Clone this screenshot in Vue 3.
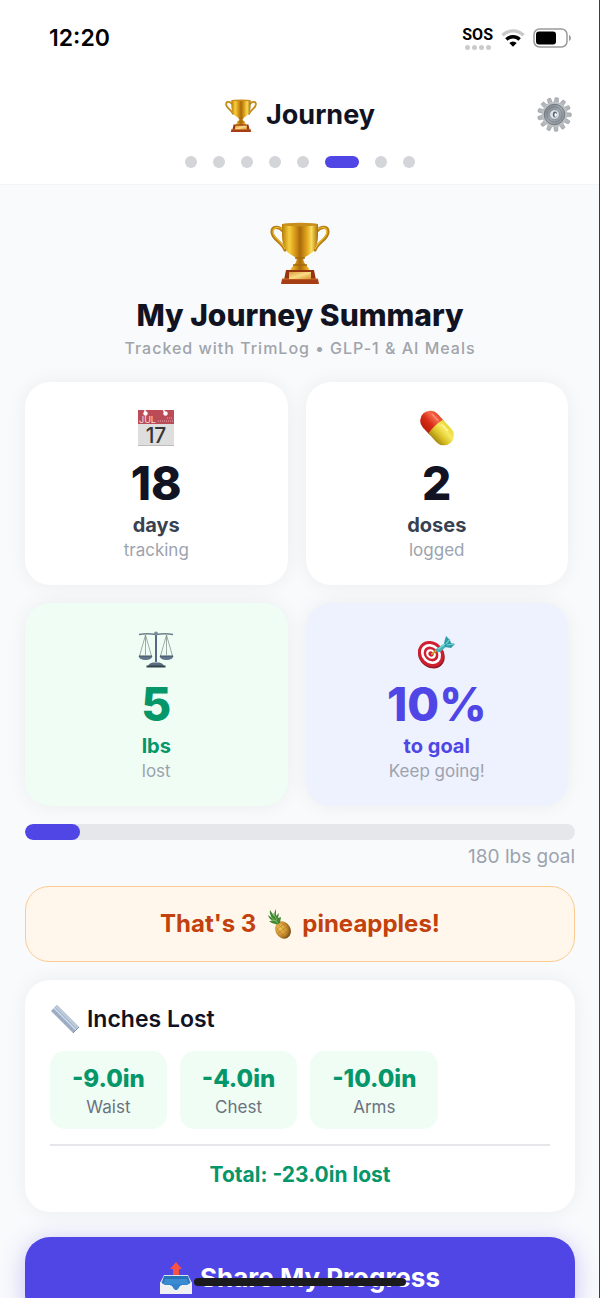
<script setup>
import { ref, computed } from 'vue';

const pageCount = 8;
const activePage = ref(5);

const stats = [
    { icon: 'calendar', value: '18', unit: 'days', note: 'tracking', tone: 'plain' },
    { icon: 'pill', value: '2', unit: 'doses', note: 'logged', tone: 'plain' },
    { icon: 'scale', value: '5', unit: 'lbs', note: 'lost', tone: 'green' },
    { icon: 'target', value: '10%', unit: 'to goal', note: 'Keep going!', tone: 'indigo' },
];

const goalPercent = ref(10);

const measurements = [
    { label: 'Waist', lost: 9 },
    { label: 'Chest', lost: 4 },
    { label: 'Arms', lost: 10 },
];

const totalLost = computed(() => measurements.reduce((sum, m) => sum + m.lost, 0));

const gearTeeth = Array.from({ length: 13 }, (_, i) => (i * 360) / 13 + 8);
</script>

<template>
    <div class="app">
        <!-- shared gradients and the trophy, which is drawn twice -->
        <svg class="defs" width="0" height="0" aria-hidden="true">
            <defs>
                <linearGradient id="gold" x1="0" x2="1" y1="0" y2="0">
                    <stop offset="0" stop-color="#b87a08" />
                    <stop offset="0.2" stop-color="#f6cf3c" />
                    <stop offset="0.36" stop-color="#d9981a" />
                    <stop offset="0.5" stop-color="#a86a0c" />
                    <stop offset="0.68" stop-color="#e0a21c" />
                    <stop offset="0.82" stop-color="#f9dc5a" />
                    <stop offset="1" stop-color="#a96c08" />
                </linearGradient>
                <linearGradient id="plate" x1="0" x2="1" y1="0" y2="1">
                    <stop offset="0" stop-color="#d99a35" />
                    <stop offset="0.5" stop-color="#fbdc86" />
                    <stop offset="1" stop-color="#d8942c" />
                </linearGradient>
            </defs>
            <symbol id="trophy" viewBox="0 0 60 62">
                <path
                    d="M13 9C9 4 2 4 2 10c0 7 10 10 13 18M47 9c4-5 11-5 11 1 0 7-10 10-13 18"
                    fill="none"
                    stroke="#b57c10"
                    stroke-width="3.2"
                    stroke-linecap="round"
                />
                <path
                    d="M13 8C9 4 3 5 3 10c0 6 9 9 12 17M47 8c4-4 10-3 10 2 0 6-9 9-12 17"
                    fill="none"
                    stroke="#edbd35"
                    stroke-width="1.2"
                />
                <path
                    d="M12 2h36v11c0 11-4 18-13 22-2 1-2 3-1 5 1 3 5 5 6 9H20c1-4 5-6 6-9 1-2 1-4-1-5-9-4-13-11-13-22z"
                    fill="url(#gold)"
                />
                <ellipse cx="30" cy="2.6" rx="18" ry="1.8" fill="#c98d1c" />
                <path d="M25 36h10M23 43h14" stroke="#a3690d" stroke-width="1.4" />
                <path d="M16 48h28l2 10H14z" fill="#963410" />
                <path d="M12 57h36l1 5H11z" fill="#a53e14" />
                <path d="M12 57h36" stroke="#cf6c2d" stroke-width="1" />
                <path d="M19 50h22v7H19z" fill="url(#plate)" />
            </symbol>
        </svg>

        <div class="status-bar">
            <span class="clock">12:20</span>
            <div class="signals">
                <div class="sos">
                    <span>SOS</span>
                    <div class="sos-dots"><i v-for="n in 4" :key="n" /></div>
                </div>
                <svg class="wifi" viewBox="0 0 24 18" aria-hidden="true">
                    <path d="M1.5 6.2a15 15 0 0 1 21 0" fill="none" stroke="#c9c9cb" stroke-width="3.4" />
                    <path d="M5.4 10.5a9.4 9.4 0 0 1 13.2 0" fill="none" stroke="#000" stroke-width="3.4" />
                    <path d="M12 17.8l-3.7-3.9a5.3 5.3 0 0 1 7.4 0z" fill="#000" />
                </svg>
                <svg class="battery" viewBox="0 0 38 20" aria-hidden="true">
                    <rect x="1" y="1" width="33" height="18" rx="5.5" fill="#fff" stroke="#9b9b9b" stroke-width="1.5" />
                    <rect x="3" y="3.5" width="20" height="13" rx="3" fill="#000" />
                    <path d="M36 7c2.6 1 2.6 5 0 6z" fill="#9b9b9b" />
                </svg>
            </div>
        </div>

        <header class="header">
            <h1 class="header-title">
                <svg class="trophy-small" aria-hidden="true"><use href="#trophy" /></svg>
                Journey
            </h1>
            <button class="settings" type="button" aria-label="Settings">
                <svg viewBox="0 0 36 36" aria-hidden="true">
                    <defs>
                        <linearGradient id="steel" x1="0" x2="1" y1="0" y2="1">
                            <stop offset="0" stop-color="#747b83" />
                            <stop offset="0.5" stop-color="#a4abb2" />
                            <stop offset="1" stop-color="#858c94" />
                        </linearGradient>
                    </defs>
                    <path
                        v-for="angle in gearTeeth"
                        :key="angle"
                        d="M15.8 8L16.2 1Q18 0 19.8 1L20.2 8z"
                        fill="#b3b7bb"
                        stroke="#8a8f95"
                        stroke-width="0.5"
                        :transform="`rotate(${angle} 18 18)`"
                    />
                    <circle cx="18" cy="18" r="13" fill="#bdc0c3" />
                    <circle cx="18" cy="18" r="10.5" fill="url(#steel)" stroke="#6f767e" stroke-width="1" />
                    <circle cx="18" cy="18" r="7.8" fill="none" stroke="#737b84" stroke-width="0.8" />
                    <circle cx="18" cy="18" r="5" fill="#dfe4e9" stroke="#79828c" stroke-width="0.8" />
                    <ellipse cx="18.5" cy="18" rx="2.2" ry="3" fill="#59616a" />
                    <ellipse cx="19.2" cy="18.4" rx="1.3" ry="2" fill="#fff" />
                </svg>
            </button>
            <nav class="dots" aria-label="Pages">
                <button
                    v-for="n in pageCount"
                    :key="n"
                    type="button"
                    class="dot"
                    :class="{ active: n - 1 === activePage }"
                    :aria-label="`Page ${n}`"
                    @click="activePage = n - 1"
                />
            </nav>
        </header>

        <main class="content">
            <section class="intro">
                <svg class="trophy-large" aria-hidden="true"><use href="#trophy" /></svg>
                <h2>My Journey Summary</h2>
                <p>Tracked with TrimLog • GLP-1 &amp; AI Meals</p>
            </section>

            <section class="stats">
                <article v-for="stat in stats" :key="stat.icon" class="stat" :class="stat.tone">
                    <svg v-if="stat.icon === 'calendar'" class="stat-icon" viewBox="0 0 42 42" aria-hidden="true">
                        <path d="M3 3h36v36H3z" fill="#dedede" />
                        <path d="M3 3h36v14H3z" fill="#bb4c57" />
                        <path d="M3 38h36v1H3z" fill="#bcbcbc" />
                        <circle cx="10.5" cy="6.5" r="2.2" fill="#fff" />
                        <circle cx="30.5" cy="6.5" r="2.2" fill="#fff" />
                        <path d="M10 3v3M28 2l2 4" stroke="#fff" stroke-width="1.4" />
                        <path d="M23 14h15M32 11h6" stroke="#cd7880" stroke-width="2" stroke-dasharray="1 1" />
                        <text x="4" y="16" class="cal-month">JUL</text>
                        <text x="21" y="36" text-anchor="middle" class="cal-day">17</text>
                    </svg>
                    <svg v-else-if="stat.icon === 'pill'" class="stat-icon" viewBox="0 0 42 42" aria-hidden="true">
                        <defs>
                            <linearGradient id="pillRed" x1="0" x2="0" y1="0" y2="1">
                                <stop offset="0" stop-color="#e8452a" />
                                <stop offset="0.25" stop-color="#f4684c" />
                                <stop offset="0.6" stop-color="#d92c17" />
                                <stop offset="1" stop-color="#b81c0c" />
                            </linearGradient>
                            <linearGradient id="pillYellow" x1="0" x2="0" y1="0" y2="1">
                                <stop offset="0" stop-color="#ead733" />
                                <stop offset="0.3" stop-color="#f6e962" />
                                <stop offset="0.65" stop-color="#dcc428" />
                                <stop offset="1" stop-color="#a88a12" />
                            </linearGradient>
                        </defs>
                        <g transform="rotate(47 21 21)">
                            <path d="M21 11H11a10 10 0 0 0 0 20H21z" fill="url(#pillRed)" />
                            <path d="M19 11h12a10 10 0 0 1 0 20H19q-2-10 0-20z" fill="url(#pillYellow)" />
                            <path d="M8 15h8" stroke="#ff8a6e" stroke-width="1.6" stroke-linecap="round" />
                            <path d="M22 15h8" stroke="#fff59a" stroke-width="1.6" stroke-linecap="round" />
                        </g>
                    </svg>
                    <svg v-else-if="stat.icon === 'scale'" class="stat-icon" viewBox="0 0 42 42" aria-hidden="true">
                        <path d="M4 6.5q8-1.5 17 0 9-1.5 17 0" fill="none" stroke="#6e7f87" stroke-width="1.3" />
                        <path d="M21 5v29" stroke="#526a86" stroke-width="2" />
                        <circle cx="21" cy="5.5" r="2" fill="#7c8e9b" />
                        <path
                            d="M10.500 7L4.500 28M10.500 7l6 21M10.500 7v20M31.500 7l-6 21M31.500 7l6 21M31.500 7v20"
                            fill="none"
                            stroke="#87968f"
                            stroke-width="0.8"
                        />
                        <path d="M3.5 28h14q-1 4-7 4t-7-4zM24.5 28h14q-1 4-7 4t-7-4z" fill="#60758a" />
                        <path d="M4 28h13M25 28h13" stroke="#3f5260" stroke-width="1" />
                        <path d="M13 38q1-3 5-3.500h6q4 .5 5 3.500z" fill="#5b6f80" />
                        <path d="M11.5 37.500h19v2h-19z" fill="#33424d" />
                    </svg>
                    <svg v-else class="stat-icon" viewBox="0 0 42 42" aria-hidden="true">
                        <g transform="rotate(45 15 26)">
                            <ellipse cx="16" cy="26.5" rx="14.3" ry="12.3" fill="#8e1620" />
                            <ellipse cx="15" cy="26" rx="13.8" ry="12" fill="#cf2030" />
                            <ellipse cx="15" cy="26" rx="10.8" ry="9.2" fill="#fff" />
                            <ellipse cx="15" cy="26" rx="8" ry="6.7" fill="#cf2030" />
                            <ellipse cx="15" cy="26" rx="5.3" ry="4.4" fill="#fff" />
                            <ellipse cx="15" cy="26" rx="2.800" ry="2.300" fill="#cf2030" />
                        </g>
                        <path d="M16 26l6-5" stroke="#d29b1e" stroke-width="2" stroke-linecap="round" />
                        <path d="M20 21l9-6 2 3-7 6q-4 1-4-3z" fill="#42b5b8" />
                        <path d="M28 15l2-7 4 4 1 3 4 1-4 4-6-1z" fill="#2c9da6" />
                        <path d="M30 16l4-5M31 17l7-1" stroke="#78d5d6" stroke-width="1.2" />
                        <path d="M22 21l7-5" stroke="#83dcdb" stroke-width="1.2" />
                    </svg>
                    <strong class="stat-value">{{ stat.value }}</strong>
                    <span class="stat-unit">{{ stat.unit }}</span>
                    <span class="stat-note">{{ stat.note }}</span>
                </article>
            </section>

            <section class="goal">
                <div class="goal-track" role="progressbar" :aria-valuenow="goalPercent" aria-label="Goal progress">
                    <div class="goal-fill" :style="{ width: `${goalPercent}%` }" />
                </div>
                <p>180 lbs goal</p>
            </section>

            <section class="fun-fact">
                <span>That's 3</span>
                <svg class="pineapple" viewBox="0 0 28 32" aria-hidden="true">
                    <defs>
                        <radialGradient id="pineBody" cx="0.4" cy="0.35" r="0.7">
                            <stop offset="0" stop-color="#f3c456" />
                            <stop offset="0.6" stop-color="#c98f30" />
                            <stop offset="1" stop-color="#66400f" />
                        </radialGradient>
                    </defs>
                    <ellipse cx="18" cy="22" rx="7.5" ry="9" transform="rotate(-28 18 22)" fill="url(#pineBody)" />
                    <path
                        d="M12 21l9-6M13 25l10-7M16 28l8-6M14 17l9 9M17 15l8 8M12 21l8 8"
                        stroke="#a56d20"
                        stroke-width="0.4"
                    />
                    <path
                        d="M13 16Q8 17 4 13l4 0Q4 11 3 7l4 3Q4 5 5 2l4 6Q9 4 11 1l0 7 3-3-1 5 3-1-1 6z"
                        fill="#3f8735"
                    />
                    <path d="M13 15L6 9M12 12L8 5M12 13L6 12" stroke="#83bd5e" stroke-width="0.9" />
                </svg>
                <span>pineapples!</span>
            </section>

            <section class="inches">
                <h3>
                    <svg class="ruler" viewBox="0 0 30 30" aria-hidden="true">
                        <path d="M7 1l22 22-6 6L1 7z" fill="#9daec5" />
                        <path d="M7 1l22 22-2 2L5 3z" fill="#bccadb" />
                        <path d="M4 4l22 22" stroke="#d2deeb" stroke-width="1.2" />
                        <path
                            d="M2 8l2-2M5 11l2-2M8 14l2-2M11 17l2-2M14 20l2-2M17 23l2-2M20 26l2-2"
                            stroke="#8c9db5"
                            stroke-width="0.5"
                        />
                        <path d="M23 29l6-6" stroke="#8092ac" stroke-width="1" />
                    </svg>
                    Inches Lost
                </h3>
                <ul class="chips">
                    <li v-for="m in measurements" :key="m.label">
                        <strong>-{{ m.lost.toFixed(1) }}in</strong>
                        <span>{{ m.label }}</span>
                    </li>
                </ul>
                <p class="total">Total: -{{ totalLost.toFixed(1) }}in lost</p>
            </section>

            <button class="share" type="button">
                <svg class="outbox" viewBox="0 0 32 32" aria-hidden="true">
                    <path d="M4 13h24l4 8H0z" fill="#d6e4f0" />
                    <path d="M4 14h24l3 9H1z" fill="#2672b8" />
                    <path d="M5 17h22l2 6H3z" fill="#3b8bd2" />
                    <path d="M0 20l5 3h5q2 0 3 2 1 3 3 3t3-3q1-2 3-2h5l5-3v12H0z" fill="#eef0f1" />
                    <path d="M4 22h24l-2 1h-4q-2 0-3 2-1 3-3 3t-3-3q-1-2-3-2H6z" fill="#3184cb" />
                    <path d="M16 0l6 7h-3v6h-6V7h-3z" fill="#fb5142" />
                </svg>
                Share My Progress
            </button>
        </main>

        <div class="home-indicator" />
    </div>
</template>

<style>
body {
    margin: 0;
}
</style>

<style scoped>
.app {
    position: relative;
    display: flex;
    flex-direction: column;
    height: 100vh;
    overflow: hidden;
    background: #f9fafc;
    color: #111322;
    font-family: Inter, 'Liberation Sans', sans-serif;
}

/* thin dark edge on the right of the screen */
.app::after {
    content: '';
    position: absolute;
    top: 0;
    right: 0;
    bottom: 0;
    width: 1px;
    background: #3c3d3f;
}

.defs {
    position: absolute;
}

h1,
h2,
h3,
p,
ul {
    margin: 0;
    padding: 0;
}

button {
    border: 0;
    padding: 0;
    font-family: inherit;
    cursor: pointer;
}

.status-bar {
    display: flex;
    justify-content: space-between;
    align-items: center;
    flex-shrink: 0;
    height: 76px;
    padding: 0 29px 0 49px;
    background: #fff;
    color: #000;
}

.clock {
    font-size: 23px;
    font-weight: 600;
}

.signals {
    display: flex;
    align-items: center;
    gap: 8px;
}

.sos {
    display: flex;
    flex-direction: column;
    align-items: center;
    gap: 1px;
    font-family: 'Liberation Sans Narrow', Roboto, sans-serif;
    font-size: 16px;
    font-weight: 700;
    line-height: 18px;
}

.sos-dots {
    display: flex;
    gap: 2px;
}

.sos-dots i {
    width: 5px;
    height: 5px;
    border-radius: 50%;
    background: #cbcbcd;
}

.wifi {
    width: 24px;
    height: 18px;
}

.battery {
    width: 38px;
    height: 20px;
}

.header {
    position: relative;
    flex-shrink: 0;
    padding: 18px 25px 16px;
    border-bottom: 1px solid #f3f4f6;
    background: #fff;
}

.header-title {
    display: flex;
    justify-content: center;
    align-items: center;
    gap: 9px;
    font-size: 27px;
    font-weight: 700;
    line-height: 42px;
}

.trophy-small {
    width: 32px;
    height: 33px;
}

.settings {
    position: absolute;
    top: 21px;
    right: 28px;
    width: 35px;
    height: 35px;
    background: none;
}

.settings svg {
    display: block;
}

.dots {
    display: flex;
    justify-content: center;
    gap: 16px;
    margin-top: 20px;
}

.dot {
    width: 12px;
    height: 12px;
    border-radius: 6px;
    background: #d3d5d8;
}

.dot.active {
    width: 34px;
    background: #4f46e5;
}

.content {
    flex: 1;
    min-height: 0;
    overflow-y: auto;
    padding: 37px 25px 40px;
    scrollbar-width: none;
}

.intro {
    display: flex;
    flex-direction: column;
    align-items: center;
    text-align: center;
}

.trophy-large {
    width: 60px;
    height: 62px;
}

.intro h2 {
    margin-top: 12px;
    font-size: 30px;
    font-weight: 800;
    line-height: 38px;
}

.intro p {
    margin-top: 2px;
    color: #a0a4ab;
    font-size: 16px;
    font-weight: 500;
    letter-spacing: 1px;
    line-height: 24px;
}

.stats {
    display: grid;
    grid-template-columns: 1fr 1fr;
    gap: 18px;
    margin-top: 22px;
    padding-right: 7px;
}

.stat {
    display: flex;
    flex-direction: column;
    align-items: center;
    padding: 25px 20px 24px;
    border-radius: 25px;
    background: #fff;
    box-shadow: 0 0 20px rgba(17, 19, 34, 0.06);
}

.stat.green {
    background: #effdf5;
}

.stat.indigo {
    background: #eef1fe;
}

.stat-icon {
    width: 42px;
    height: 42px;
}

.cal-month {
    fill: #f6dcdf;
    font-size: 9px;
}

.cal-day {
    fill: #353535;
    font-size: 21px;
    font-weight: 500;
}

.stat-value {
    margin-top: 6px;
    font-size: 46px;
    font-weight: 800;
    line-height: 56px;
}

.stat-unit {
    color: #374151;
    font-size: 20px;
    font-weight: 700;
    line-height: 28px;
}

.stat-note {
    color: #9ca3af;
    font-size: 17px;
    line-height: 22px;
}

.green .stat-value,
.green .stat-unit {
    color: #059669;
}

.indigo .stat-value,
.indigo .stat-unit {
    color: #4f46e5;
}

.goal {
    margin-top: 18px;
}

.goal-track {
    height: 16px;
    overflow: hidden;
    border-radius: 8px;
    background: #e5e7eb;
}

.goal-fill {
    height: 100%;
    border-radius: 8px;
    background: #4f46e5;
}

.goal p {
    margin-top: 4px;
    color: #9ca3af;
    font-size: 19px;
    line-height: 26px;
    text-align: right;
}

.fun-fact {
    display: flex;
    justify-content: center;
    align-items: center;
    gap: 8px;
    margin-top: 16px;
    padding: 21px;
    border: 1px solid #fccb92;
    border-radius: 24px;
    background: #fff7eb;
    color: #c2410c;
    font-size: 24px;
    font-weight: 700;
    line-height: 32px;
}

.pineapple {
    width: 30px;
    height: 32px;
}

.inches {
    margin-top: 18px;
    padding: 22px 25px;
    border-radius: 25px;
    background: #fff;
    box-shadow: 0 0 20px rgba(17, 19, 34, 0.06);
}

.inches h3 {
    display: flex;
    align-items: center;
    gap: 7px;
    font-size: 23px;
    font-weight: 600;
    line-height: 34px;
}

.ruler {
    width: 30px;
    height: 30px;
}

.chips {
    display: flex;
    gap: 13px;
    margin-top: 15px;
    list-style: none;
}

.chips li {
    display: flex;
    flex-direction: column;
    align-items: center;
    padding: 12px 22px 10px;
    border-radius: 15px;
    background: #effdf5;
}

.chips strong {
    color: #059669;
    font-size: 24px;
    font-weight: 800;
    line-height: 32px;
}

.chips span {
    color: #6b7280;
    font-size: 17px;
    line-height: 24px;
}

.total {
    margin-top: 15px;
    padding-top: 14px;
    border-top: 2px solid #e5e7eb;
    color: #059669;
    font-size: 21px;
    font-weight: 700;
    line-height: 30px;
    text-align: center;
}

.share {
    display: flex;
    justify-content: center;
    align-items: center;
    gap: 8px;
    width: 100%;
    margin-top: 25px;
    padding: 24px;
    border-radius: 25px;
    background: #4f46e5;
    box-shadow: 0 4px 24px rgba(79, 70, 229, 0.3);
    color: #fff;
    font-size: 26px;
    font-weight: 700;
    line-height: 34px;
}

.outbox {
    width: 32px;
    height: 32px;
}

.home-indicator {
    position: absolute;
    bottom: 12px;
    left: 50%;
    width: 212px;
    height: 8px;
    margin-left: -106px;
    border-radius: 4px;
    background: #1b1b1d;
}
</style>
